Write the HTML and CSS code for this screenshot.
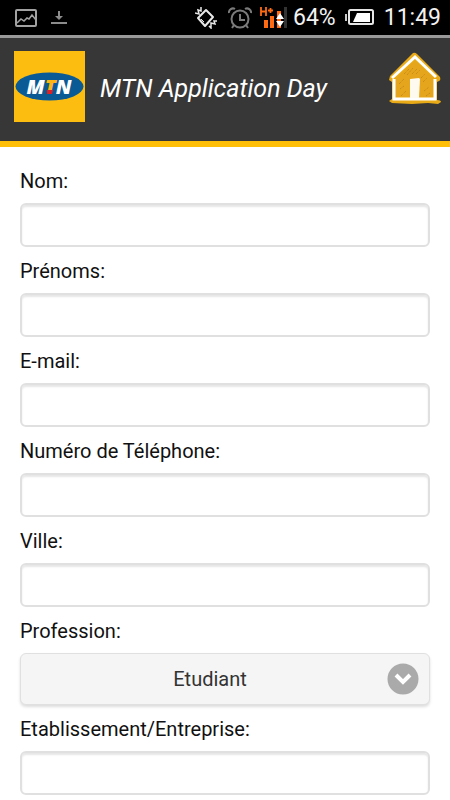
FILE: index.html
```html
<!DOCTYPE html>
<html lang="fr">
<head>
<meta charset="utf-8">
<meta name="viewport" content="width=device-width, initial-scale=1">
<title>MTN Application Day</title>
<link rel="stylesheet" href="styles.css">
</head>
<body>
<div class="status">
  <svg class="icon-picture" width="22" height="18" viewBox="0 0 22 18" fill="none" stroke="#a2a2a2" stroke-width="2">
    <rect x="1" y="1" width="20" height="16" rx="1"/>
    <path d="M2 14l4-4 3 2 3-3 2 1 3-4 4 5" stroke-width="1.5"/>
  </svg>
  <svg class="icon-download" width="16" height="14" viewBox="0 0 16 14" fill="#8c8c8c">
    <path d="M7 0h2v5h3l-4 4-4-4h3zM0 11h16v2H0z"/>
  </svg>
  <svg class="icon-vibrate" width="22" height="22" viewBox="0 0 22 22" fill="none" stroke="#e8e8e8" stroke-width="2">
    <path d="M11 3l7 7-8 9-7-8z" stroke-linejoin="round"/>
    <path d="M6 0v4l-3-1 1 4-4-1M22 14l-3 0 1 3-4-1v5l-2-2" stroke-width="1.5"/>
    <path d="M6 12l3 3" stroke-width="1"/>
  </svg>
  <svg class="icon-alarm" width="24" height="22" viewBox="0 0 24 22" fill="none" stroke="#7b7b7b" stroke-width="2">
    <circle cx="12" cy="12" r="8.5"/>
    <path d="M12 7v6h5M6 18l-2 3M18 18l2 3M1 6a4 4 0 0 1 6-4M23 6a4 4 0 0 0-6-4"/>
  </svg>
  <svg class="icon-signal" width="27" height="22" viewBox="0 0 27 22">
    <path d="M4 13h4v8H4zM10 9h4v12h-4zM17 4h4v17h-4z" fill="#ff6a13"/>
    <path d="M24 0h3v21h-3z" fill="#333"/>
    <path d="M1 0v9M6 0v9M1 4.500h5M8 3.500h5M10.500 1v5" stroke="#ff6a13" stroke-width="1.800"/>
    <path d="M20 6l4 6h-8zM20 20l4-6h-8z" fill="#fff"/>
  </svg>
  <span class="percent">64%</span>
  <svg class="icon-battery" width="29" height="17" viewBox="0 0 29 17">
    <rect x="4" y="1" width="24" height="14" rx="1.500" fill="none" stroke="#e6e6e6" stroke-width="2"/>
    <path d="M0 5h2v7H0z" fill="#ccc"/>
    <path d="M12 4h13v9H8z" fill="#fff"/>
  </svg>
  <span class="clock">11:49</span>
</div>
<header class="header">
  <svg class="logo" width="71" height="71" viewBox="0 0 71 71" role="img" aria-label="MTN">
    <rect width="71" height="71" fill="#fdbd10"/>
    <ellipse cx="35.500" cy="35.500" rx="34" ry="14" fill="#0a5a96"/>
    <text class="logo-text" x="35" y="43" text-anchor="middle">M<tspan fill="#fdb515">T</tspan>N</text>
    <path d="M33 39h6l-1 4h-5z" fill="#df1f26"/>
  </svg>
  <h1 class="title">MTN Application Day</h1>
  <a class="home" href="#" aria-label="Accueil">
    <svg width="54" height="54" viewBox="0 0 54 54">
      <path d="M25 1q2-1 4 1l23 23q1 3-1 4l-2 1v18q4 0 4 2l-3 2-10-1-16 1-20-1-3-2 3-2V30l-3-2 1-4z" fill="#e9aa17"/>
      <path d="M6 27v20h41V27" fill="none" stroke="#fff" stroke-width="3"/>
      <path d="M4 26L27 5l21 20" fill="none" stroke="#fff" stroke-width="3"/>
      <path d="M8 27L27 9l18 17v19H8z" fill="#e5a51c"/>
      <path d="M22 27l9-1 1 1-1 19h-9z" fill="#fffaf0"/>
      <path d="M16 22l5-5M19 23l6-7M24 22l5-5M28 22l4-4M33 26l4-4M35 30l4-4M11 32l5-5M12 37l4-3M36 39l5-4M38 44l4-3M13 44l5-5" stroke="#bd8619" stroke-dasharray="1 1"/>
    </svg>
  </a>
</header>
<main>
  <form class="form">
    <div class="field"><label for="nom">Nom:</label><input id="nom" type="text"></div>
    <div class="field"><label for="prenoms">Prénoms:</label><input id="prenoms" type="text"></div>
    <div class="field"><label for="email">E-mail:</label><input id="email" type="email"></div>
    <div class="field"><label for="tel">Numéro de Téléphone:</label><input id="tel" type="tel"></div>
    <div class="field"><label for="ville">Ville:</label><input id="ville" type="text"></div>
    <div class="field">
      <label for="profession">Profession:</label>
      <div class="select-wrap">
        <select id="profession"><option>Etudiant</option></select>
        <svg class="chevron" width="32" height="32" viewBox="0 0 32 32" aria-hidden="true">
          <circle cx="16" cy="16" r="15.500" fill="#aaa"/>
          <path d="M9 12l7 7 7-7" fill="none" stroke="#fff" stroke-width="4"/>
        </svg>
      </div>
    </div>
    <div class="field"><label for="etab">Etablissement/Entreprise:</label><input id="etab" type="text"></div>
  </form>
</main>
</body>
</html>
```
FILE: styles.css
```css
* {
  box-sizing: border-box;
}

body {
  margin: 0;
  background: #fff;
  color: #111;
  font-family: Roboto, "Liberation Sans", sans-serif;
  font-size: 20px;
}

.status {
  display: flex;
  align-items: center;
  height: 38px;
  padding: 0 9px 0 15px;
  border-bottom: 3px solid #999;
  background: #000;
  color: #f2f2f2;
  font-size: 23px;
  line-height: 36px;
}

.icon-download {
  margin-left: 14px;
}

.icon-vibrate {
  margin-left: auto;
}

.icon-alarm {
  margin-left: 11px;
}

.icon-signal {
  margin-left: 8px;
}

.percent {
  margin-left: 6px;
}

.icon-battery {
  margin-left: 9px;
}

.clock {
  margin-left: 10px;
}

.header {
  display: flex;
  align-items: center;
  padding: 13px 8px 19px 14px;
  border-bottom: 6px solid #ffbe08;
  background: #373737;
}

.logo-text {
  fill: #fff;
  font-family: "Open Sans", sans-serif;
  font-size: 20px;
  font-style: italic;
  font-weight: 800;
}

.title {
  flex: 1;
  margin: 4px 0 0 15px;
  color: #fff;
  font-size: 25px;
  font-style: italic;
  font-weight: 400;
  line-height: 32px;
}

.home {
  display: flex;
  margin-bottom: 16px;
}

.form {
  padding: 22px 20px 0;
}

.field + .field {
  margin-top: 12px;
}

label {
  display: block;
  margin-bottom: 10px;
  line-height: 24px;
}

input,
select {
  display: block;
  width: 100%;
  border: 2px solid #e0e0e0;
  border-radius: 6px;
  font: inherit;
}

input {
  height: 44px;
  padding: 0 8px;
  background: #fff;
  box-shadow: inset 0 2px 2px #e6e6e6;
}

.select-wrap {
  position: relative;
}

select {
  height: 52px;
  padding: 0 48px 0 18px;
  appearance: none;
  border-width: 1px;
  background: #f5f5f5;
  color: #333;
  box-shadow: 0 2px 3px #ddd;
  text-align: center;
  text-align-last: center;
}

.chevron {
  position: absolute;
  top: 10px;
  right: 11px;
  pointer-events: none;
}
```
